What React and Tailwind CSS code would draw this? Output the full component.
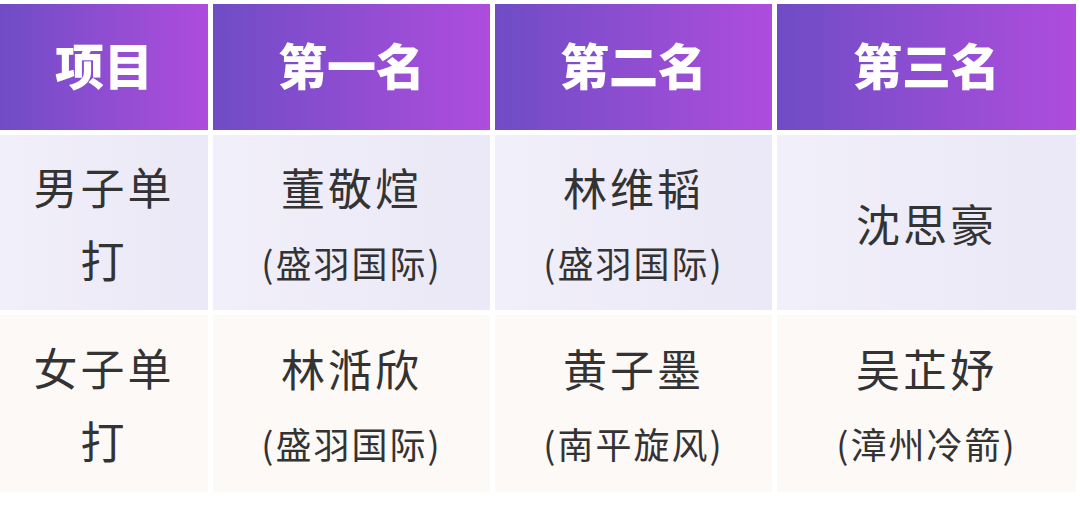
const font = { fontFamily: '"Noto Sans CJK SC", "Noto Sans", sans-serif' };

const headers = ["项目", "第一名", "第二名", "第三名"];

const rows = [
  {
    bg: "bg-gradient-to-r from-[#f1eff9] to-[#ebe8f7]",
    h: "h-[175px]",
    event: ["男子单", "打"],
    places: [
      { name: "董敬煊", team: "(盛羽国际)" },
      { name: "林维韬", team: "(盛羽国际)" },
      { name: "沈思豪" },
    ],
  },
  {
    bg: "bg-[#fcf9f7]",
    h: "h-[177px]",
    event: ["女子单", "打"],
    places: [
      { name: "林湉欣", team: "(盛羽国际)" },
      { name: "黄子墨", team: "(南平旋风)" },
      { name: "吴芷妤", team: "(漳州冷箭)" },
    ],
  },
];

function Place({ name, team }) {
  return (
    <div className="flex flex-col items-center">
      <div className="text-[44px] leading-[56px] tracking-[3px] text-[#333]">{name}</div>
      {team && (
        <div className="mt-[23px] text-[36px] leading-[48px] tracking-[2px] text-[#333]">{team}</div>
      )}
    </div>
  );
}

export default function App() {
  return (
    <div className="w-[1080px] h-[507px] bg-white pt-[4px]" style={font}>
      <div className="grid grid-cols-[208px_277px_277px_299px] gap-[5px]">
        {headers.map((h) => (
          <div
            key={h}
            className="h-[126px] pb-[6px] flex items-center justify-center bg-gradient-to-r from-[#6f4cc6] to-[#ae4cdd] text-white text-[49px] font-black"
          >
            {h}
          </div>
        ))}
        {rows.map((r, i) => (
          <div key={i} className="contents">
            <div className={`${r.h} ${r.bg} flex flex-col items-center justify-center`}>
              {r.event.map((t) => (
                <div key={t} className="text-[44px] leading-[73px] tracking-[3px] text-[#333]">
                  {t}
                </div>
              ))}
            </div>
            {r.places.map((p) => (
              <div key={p.name} className={`${r.h} ${r.bg} flex items-center justify-center`}>
                <Place {...p} />
              </div>
            ))}
          </div>
        ))}
      </div>
    </div>
  );
}
